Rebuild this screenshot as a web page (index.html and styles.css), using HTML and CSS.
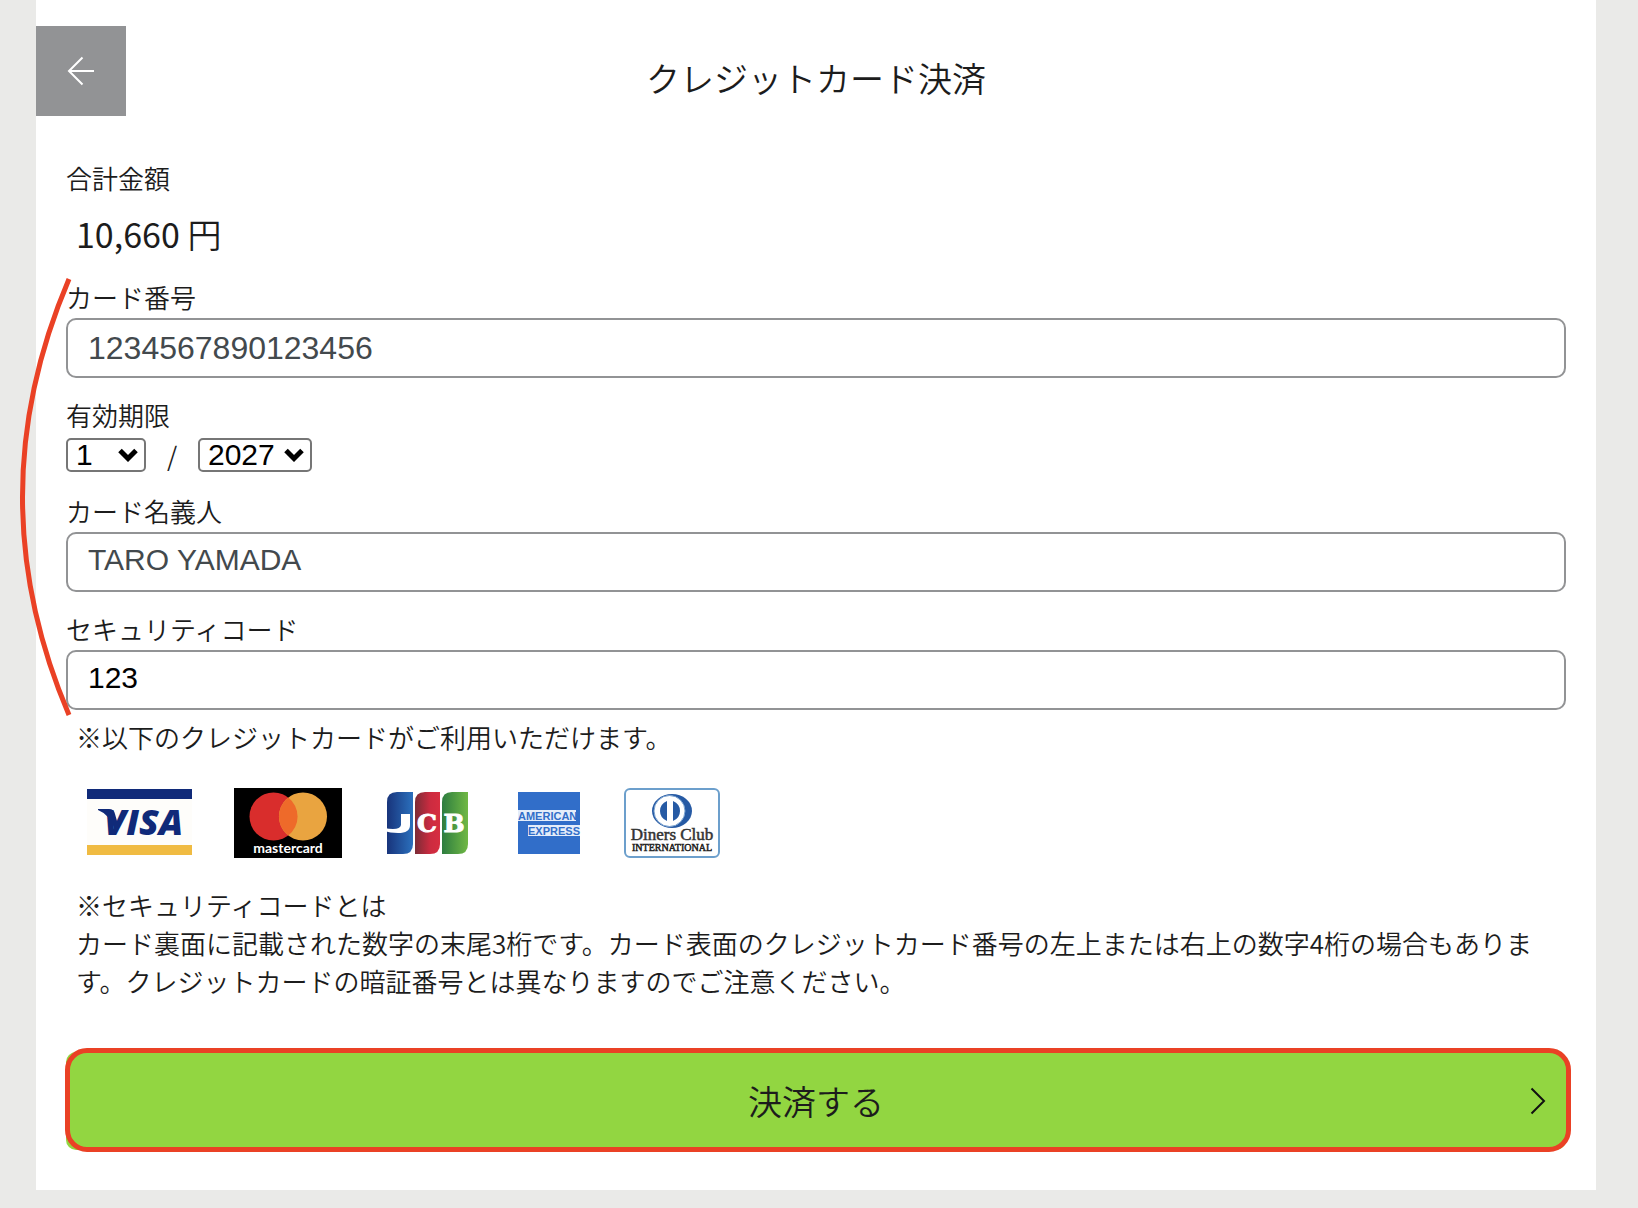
FILE: index.html
```
<!DOCTYPE html>
<html lang="ja">
<head>
<meta charset="utf-8">
<meta name="viewport" content="width=device-width, initial-scale=1">
<title>クレジットカード決済</title>
<link rel="stylesheet" href="styles.css">
</head>
<body>
<main class="card">
  <header class="header">
    <button class="back" type="button" aria-label="戻る">
      <svg width="28" height="30" viewBox="0 0 28 30" fill="none" stroke="#fff" stroke-width="2"><path d="M15.500 1.500 2 15 15.500 28.500M2 15h25"/></svg>
    </button>
    <h1 class="title">クレジットカード決済</h1>
  </header>
  <form class="form">
    <section class="total">
      <h2 class="label">合計金額</h2>
      <p class="amount"><span class="number">10,660</span> 円</p>
    </section>

    <div class="fields">
      <div class="field">
        <label class="label" for="number">カード番号</label>
        <input class="input input-number" id="number" type="text" inputmode="numeric" placeholder="1234567890123456">
      </div>
      <div class="field">
        <label class="label" for="month">有効期限</label>
        <div class="expiry">
          <select class="select month" id="month"><option>1</option></select>
          <span class="slash">/</span>
          <select class="select year" aria-label="年"><option>2027</option></select>
        </div>
      </div>
      <div class="field">
        <label class="label" for="holder">カード名義人</label>
        <input class="input" id="holder" type="text" placeholder="TARO YAMADA">
      </div>
      <div class="field">
        <label class="label" for="code">セキュリティコード</label>
        <input class="input" id="code" type="text" inputmode="numeric" value="123">
      </div>
      <svg class="bracket" width="54" height="440" viewBox="0 0 54 440" fill="none" stroke="#ea4125" stroke-width="5"><path d="M51 1Q-42 219 51 437"/></svg>
    </div>

    <p class="note">※以下のクレジットカードがご利用いただけます。</p>
    <ul class="brands">
      <li>
        <svg width="106" height="70" viewBox="0 0 106 70" role="img" aria-label="VISA">
          <path fill="#fefdfa" d="M1 1h105v66H1z"/>
          <path fill="#102a79" d="M1 1h105v10H1zM12 21h11q5 0 6 5l4 14-4 3q-4-16-17-21z"/>
          <path fill="#f0bb42" d="M1 57h105v10H1z"/>
          <text class="visa-text" x="18" y="47">VISA</text>
        </svg>
      </li>
      <li>
        <svg width="108" height="70" viewBox="0 0 108 70" role="img" aria-label="mastercard">
          <path d="M0 0h108v70H0z"/>
          <circle cx="39.500" cy="28.500" r="24" fill="#d92d2c"/>
          <circle cx="69" cy="28.500" r="24" fill="#e9a440"/>
          <path fill="#ee6a2a" d="M54.250 9.500a24 24 0 0 1 0 38 24 24 0 0 1 0-38z"/>
          <text class="master-text" x="54" y="65" text-anchor="middle">mastercard</text>
        </svg>
      </li>
      <li>
        <svg width="90" height="70" viewBox="0 0 90 70" role="img" aria-label="JCB">
          <defs>
            <linearGradient id="jcb-blue"><stop offset="0" stop-color="#18347b"/><stop offset="1" stop-color="#2b70bd"/></linearGradient>
            <linearGradient id="jcb-red"><stop offset="0" stop-color="#7b2c36"/><stop offset=".6" stop-color="#cb2b40"/><stop offset="1" stop-color="#d72d40"/></linearGradient>
            <linearGradient id="jcb-green"><stop offset="0" stop-color="#2d7d40"/><stop offset="1" stop-color="#70b844"/></linearGradient>
          </defs>
          <path fill="url(#jcb-blue)" d="M3 14Q3 4 13 4h16v52q0 10-10 10H3z"/>
          <path fill="url(#jcb-red)" d="M31 14Q31 4 41 4h15v52q0 10-10 10H31z"/>
          <path fill="url(#jcb-green)" d="M58 14Q58 4 68 4h16v52q0 10-10 10H58z"/>
          <path fill="#fff" d="M17 26h9v11q0 8-12 8-8 0-14-2v-3q16 3 17-3z"/>
          <text class="jcb-text" x="43" y="44" text-anchor="middle">C</text>
          <text class="jcb-text" x="70" y="44" text-anchor="middle">B</text>
        </svg>
      </li>
      <li>
        <svg width="66" height="70" viewBox="0 0 66 70" role="img" aria-label="AMERICAN EXPRESS">
          <path fill="#316ec9" d="M2 4h62v62H2z"/>
          <path fill="#e4edfa" d="M2 22h58v11H2zM12 37h52v11H12z"/>
          <text class="amex-text" x="2" y="32">AMERICAN</text>
          <text class="amex-text" x="12" y="47">EXPRESS</text>
        </svg>
      </li>
      <li>
        <svg width="96" height="70" viewBox="0 0 96 70" role="img" aria-label="Diners Club INTERNATIONAL">
          <rect x="1" y="1" width="94" height="68" rx="5" fill="#fff" stroke="#6c9fcc" stroke-width="2"/>
          <ellipse cx="48" cy="23" rx="20" ry="17" fill="#265aa4"/>
          <circle cx="45.500" cy="23" r="15.500" fill="#fff" stroke="#7ba3d0"/>
          <path fill="#265aa4" d="M43 13v20q-7-3-7-10t7-10zM49 13v20q7-3 7-10t-7-10z"/>
          <text class="diners-text" x="48" y="52" text-anchor="middle">Diners Club</text>
          <text class="diners-sub" x="48" y="63" text-anchor="middle">INTERNATIONAL</text>
        </svg>
      </li>
    </ul>
    <p class="about">※セキュリティコードとは<br>カード裏面に記載された数字の末尾3桁です。カード表面のクレジットカード番号の左上または右上の数字4桁の場合もあります。クレジットカードの暗証番号とは異なりますのでご注意ください。</p>

    <button class="submit" type="submit">
      <span>決済する</span>
      <svg class="chevron" width="16" height="28" viewBox="0 0 16 28" fill="none" stroke="#111" stroke-width="2"><path d="M1.500 1.500 14 14 1.500 26.500"/></svg>
    </button>
  </form>
</main>
</body>
</html>
```
FILE: styles.css
```
* {
  box-sizing: border-box;
}

body {
  margin: 0;
  background: #eaeae8;
  color: #1c1c1c;
  font-family: "Noto Sans CJK JP", sans-serif;
  font-size: 26px;
  font-weight: 350;
  line-height: 38px;
}

h1, h2, p, ul {
  margin: 0;
  padding: 0;
  font-weight: 350;
}

.card {
  margin: 0 42px 18px 36px;
  padding: 26px 0 40px;
  background: #fff;
}

.header {
  display: grid;
  grid-template-columns: 90px 1fr 90px;
}

.back {
  display: flex;
  align-items: center;
  justify-content: center;
  height: 90px;
  padding: 0;
  border: 0;
  background: #929395;
}

.title {
  padding-top: 27px;
  font-size: 34px;
  line-height: 50px;
  text-align: center;
}

.form {
  padding: 45px 30px 0;
}

.label {
  display: block;
  padding-bottom: 4px;
  font-size: 26px;
  line-height: 34px;
}

.amount {
  padding: 9px 10px 20px;
  font-size: 34px;
  line-height: 52px;
}

.number {
  font-weight: 400;
}

.fields {
  position: relative;
  display: flex;
  flex-direction: column;
  gap: 20px;
}

.input {
  display: block;
  width: 100%;
  height: 60px;
  padding: 0 20px 4px;
  border: 2px solid #929395;
  border-radius: 10px;
  background: #fff;
  color: #000;
  font-family: "Liberation Sans", Arial, sans-serif;
  font-size: 30px;
}

.input::placeholder {
  color: #43494d;
  opacity: 1;
}

.input-number {
  padding-bottom: 0;
  font-size: 32px;
}

.expiry {
  display: flex;
  align-items: center;
  padding: 2px 0;
}

.select {
  height: 34px;
  padding: 0 8px;
  border: 2px solid #767676;
  border-radius: 5px;
  appearance: none;
  background: #fff url("data:image/svg+xml,%3Csvg xmlns='http://www.w3.org/2000/svg' width='20' height='14' fill='none' stroke='%23000' stroke-width='5'%3E%3Cpath d='M2 2.500 10 10.500 18 2.500'/%3E%3C/svg%3E") no-repeat right 6px center;
  color: #000;
  font-family: "Liberation Sans", Arial, sans-serif;
  font-size: 30px;
  line-height: 30px;
}

.month {
  width: 80px;
}

.year {
  width: 114px;
}

.slash {
  width: 52px;
  line-height: 30px;
  text-align: center;
}

.bracket {
  position: absolute;
  top: -2px;
  left: -48px;
  pointer-events: none;
}

.note {
  padding: 8px 10px 0;
}

.brands {
  display: flex;
  gap: 42px;
  padding: 32px 20px 28px;
  list-style: none;
}

.brands svg {
  display: block;
}

.visa-text {
  fill: #102a79;
  font: italic 800 36px "Open Sans", sans-serif;
}

.master-text {
  fill: #fff;
  font: 700 14px Lato, sans-serif;
}

.jcb-text {
  fill: #fff;
  stroke: #fff;
  font: 700 25px "DejaVu Serif", serif;
}

.amex-text {
  fill: #316ec9;
  font: 700 11px "Liberation Sans", sans-serif;
}

.diners-text {
  fill: #333;
  stroke: #333;
  stroke-width: 0.5;
  font: 17px "Liberation Serif", serif;
}

.diners-sub {
  fill: #222;
  stroke: #222;
  stroke-width: 0.5;
  font: 10px "Liberation Serif", serif;
}

.about {
  padding: 0 10px 52px;
}

.submit {
  position: relative;
  display: grid;
  grid-template-columns: 1fr auto 1fr;
  align-items: center;
  width: 100%;
  height: 98px;
  padding: 0 20px;
  border: 0;
  border-radius: 10px;
  background: #92d641;
  color: #1c1c1c;
  font-family: inherit;
  font-size: 34px;
  font-weight: 350;
}

.submit span {
  grid-column: 2;
  padding-bottom: 2px;
}

.submit::after {
  content: "";
  position: absolute;
  inset: -4px -5px -2px -1px;
  border: 5px solid #ea4125;
  border-radius: 22px;
}

.chevron {
  justify-self: end;
}
```
